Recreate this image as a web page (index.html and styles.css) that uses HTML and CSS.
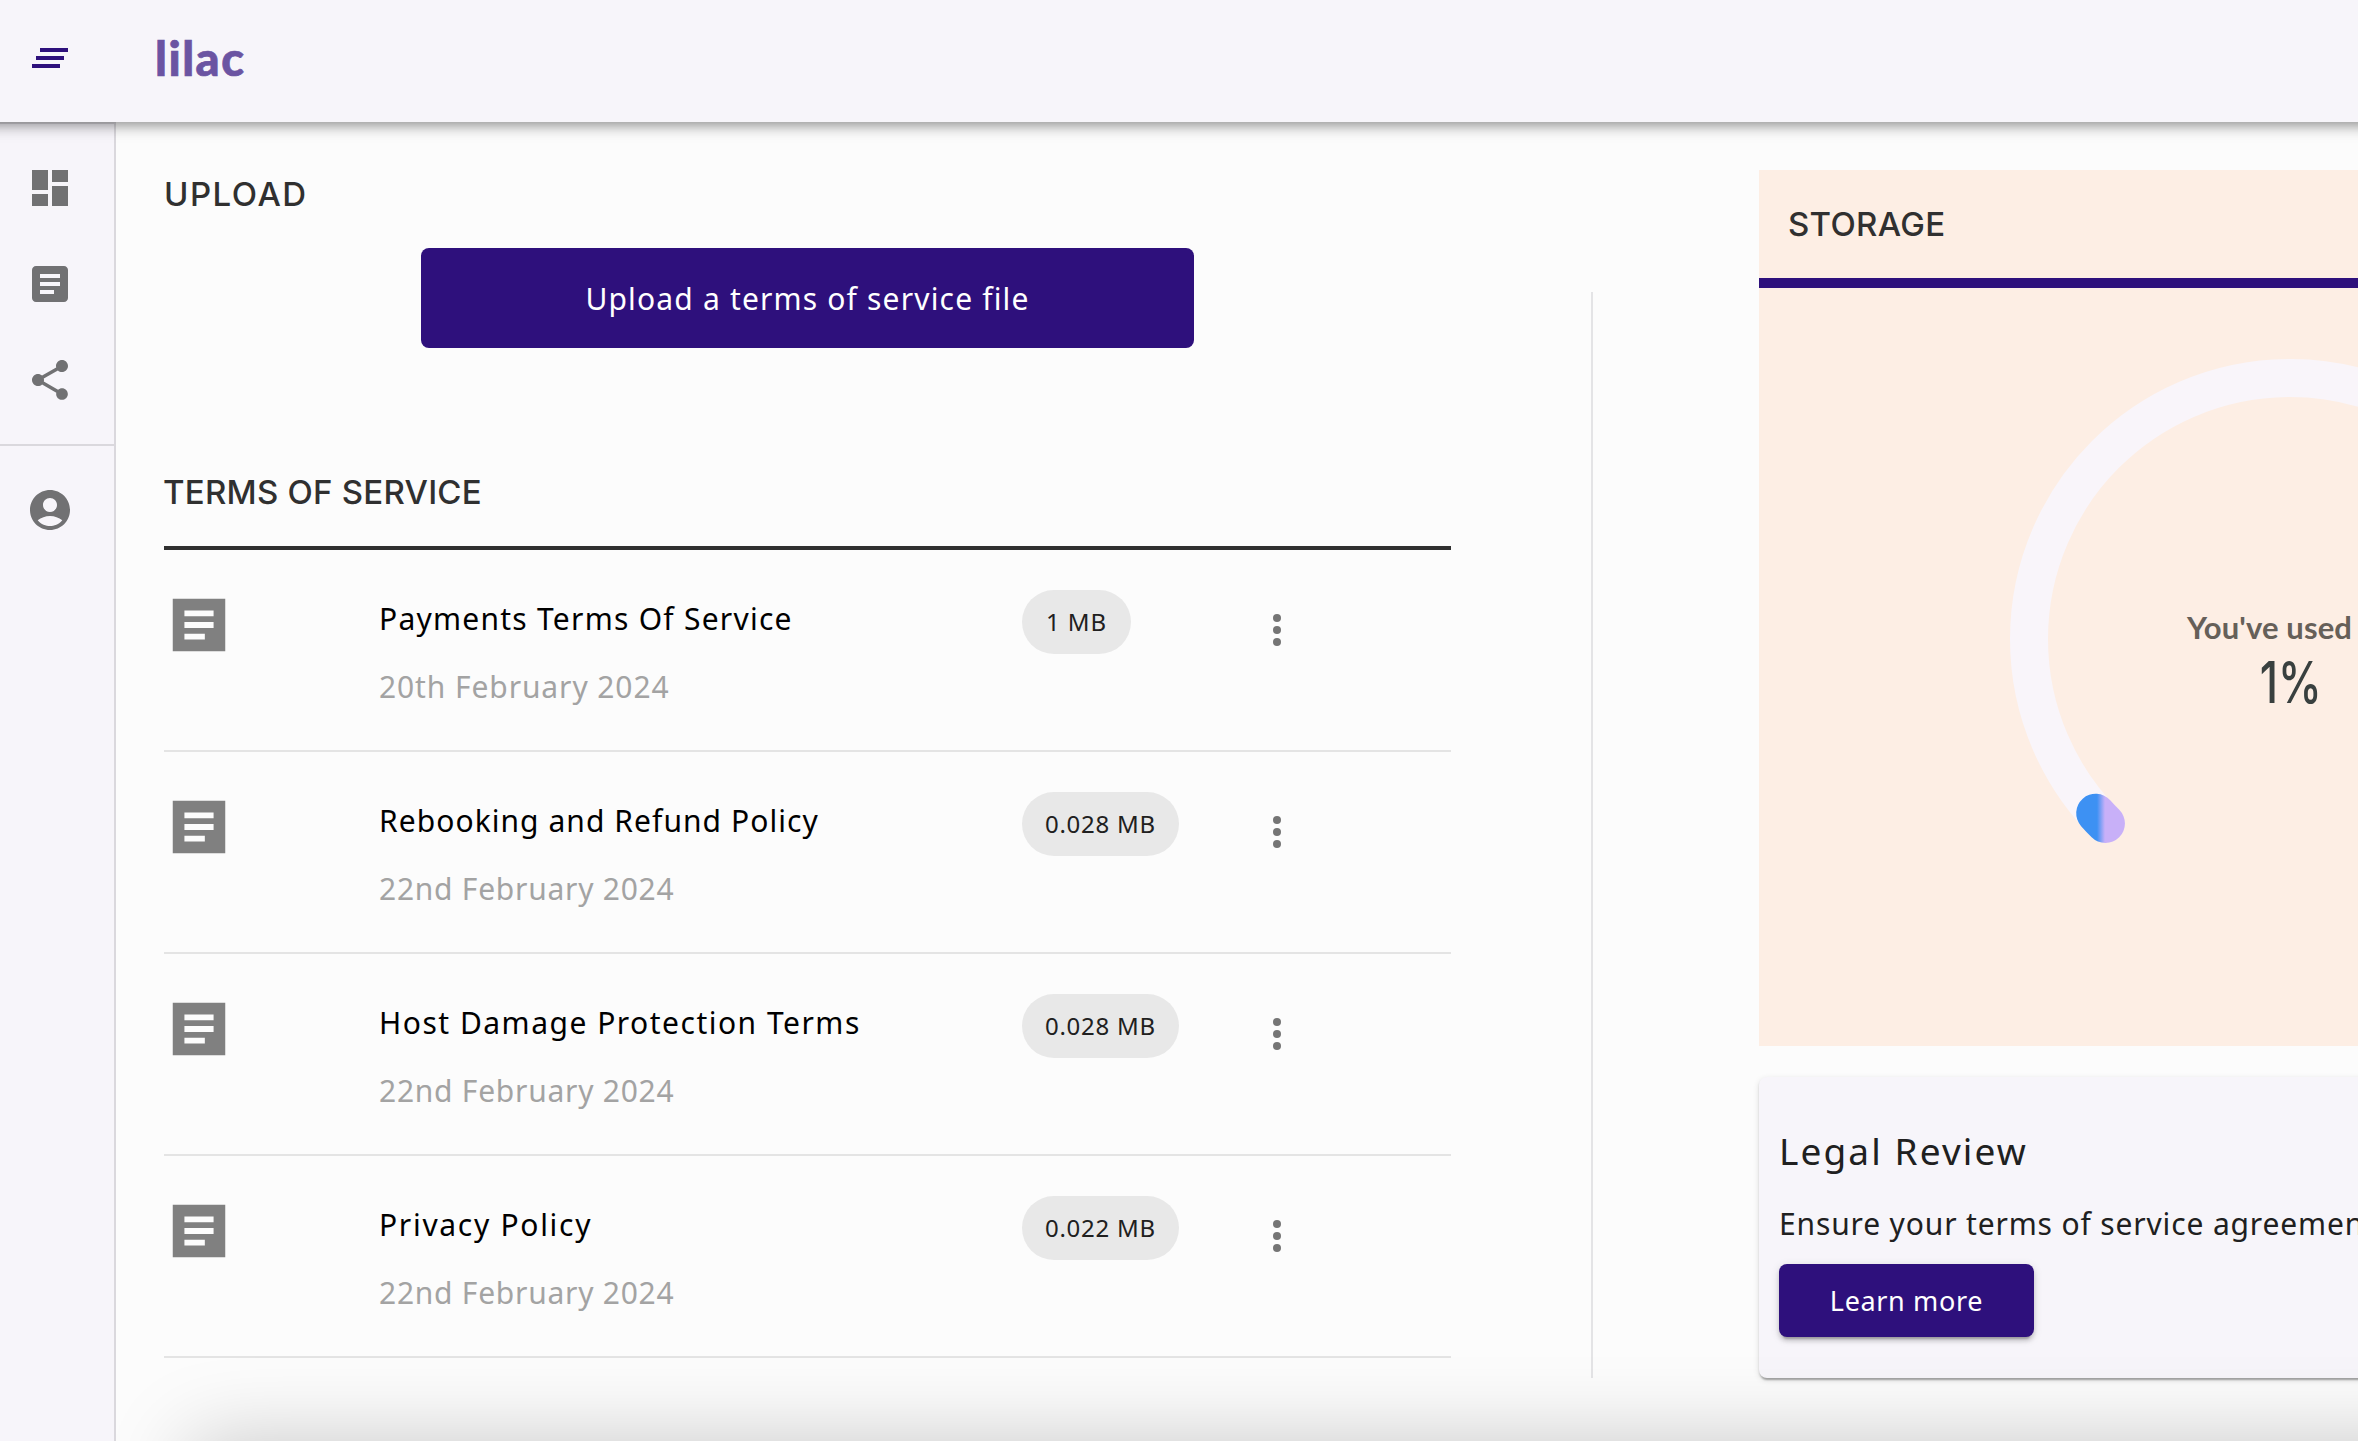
FILE: index.html
```html
<!DOCTYPE html>
<html lang="en">
<head>
<meta charset="utf-8">
<title>lilac</title>
<link rel="stylesheet" href="styles.css">
</head>
<body>
<svg class="defs" aria-hidden="true">
  <symbol id="doc" viewBox="0 0 24 24"><path fill-rule="evenodd" d="M3 3h18v18H3zM7 7v2h10V7zM7 11v2h10v-2zM7 15v2h7v-2z"/></symbol>
  <symbol id="more" viewBox="0 0 24 24"><circle cx="12" cy="6" r="2"/><circle cx="12" cy="12" r="2"/><circle cx="12" cy="18" r="2"/></symbol>
</svg>
<header class="appbar">
  <svg class="icon menu" viewBox="0 0 24 24"><path d="M5 13h14v-2H5v2zm-2 4h14v-2H3v2zM7 7v2h14V7H7z"/></svg>
  <span class="logo">lilac</span>
</header>
<div class="body">
  <nav class="sidebar">
    <div class="group">
      <svg class="icon" viewBox="0 0 24 24"><path d="M3 13h8V3H3v10zm0 8h8v-6H3v6zm10 0h8V11h-8v10zm0-18v6h8V3h-8z"/></svg>
      <svg class="icon" viewBox="0 0 24 24"><path d="M19 3H5c-1.1 0-2 .9-2 2v14c0 1.1.9 2 2 2h14c1.1 0 2-.9 2-2V5c0-1.1-.9-2-2-2zm-5 14H7v-2h7v2zm3-4H7v-2h10v2zm0-4H7V7h10v2z"/></svg>
      <svg class="icon" viewBox="0 0 24 24"><path d="M18 16.08c-.76 0-1.44.3-1.96.77L8.91 12.7c.05-.23.09-.46.09-.7s-.04-.47-.09-.7l7.05-4.11c.54.5 1.25.81 2.04.81 1.66 0 3-1.34 3-3s-1.34-3-3-3-3 1.34-3 3c0 .24.04.47.09.7L8.04 9.81C7.5 9.31 6.79 9 6 9c-1.66 0-3 1.34-3 3s1.34 3 3 3c.79 0 1.5-.31 2.04-.81l7.12 4.16c-.05.21-.08.43-.08.65 0 1.61 1.31 2.92 2.92 2.92 1.61 0 2.92-1.31 2.92-2.92s-1.31-2.92-2.92-2.92z"/></svg>
    </div>
    <div class="group">
      <svg class="icon" viewBox="0 0 24 24"><path d="M12 2C6.48 2 2 6.48 2 12s4.48 10 10 10 10-4.48 10-10S17.52 2 12 2zm0 4c1.93 0 3.5 1.57 3.5 3.5S13.93 13 12 13s-3.500-1.570-3.500-3.500S10.070 6 12 6zm0 14c-2.030 0-4.430-.82-6.140-2.880C7.550 15.800 9.680 15 12 15s4.450.8 6.140 2.120C16.430 19.180 14.030 20 12 20z"/></svg>
    </div>
  </nav>
  <main class="content">
    <section class="files">
      <h2 class="heading upload-heading">UPLOAD</h2>
      <button class="btn upload">Upload a terms of service file</button>
      <h2 class="heading list-heading">TERMS OF SERVICE</h2>
      <div class="row">
        <svg class="doc"><use href="#doc"/></svg>
        <div class="info"><div class="name payments">Payments Terms Of Service</div><div class="date first-date">20th February 2024</div></div>
        <span class="chip small">1 MB</span>
        <svg class="icon more"><use href="#more"/></svg>
      </div>
      <div class="row">
        <svg class="doc"><use href="#doc"/></svg>
        <div class="info"><div class="name rebooking">Rebooking and Refund Policy</div><div class="date">22nd February 2024</div></div>
        <span class="chip">0.028 MB</span>
        <svg class="icon more"><use href="#more"/></svg>
      </div>
      <div class="row">
        <svg class="doc"><use href="#doc"/></svg>
        <div class="info"><div class="name host">Host Damage Protection Terms</div><div class="date">22nd February 2024</div></div>
        <span class="chip">0.028 MB</span>
        <svg class="icon more"><use href="#more"/></svg>
      </div>
      <div class="row">
        <svg class="doc"><use href="#doc"/></svg>
        <div class="info"><div class="name privacy">Privacy Policy</div><div class="date">22nd February 2024</div></div>
        <span class="chip">0.022 MB</span>
        <svg class="icon more"><use href="#more"/></svg>
      </div>
    </section>
    <div class="divider"></div>
    <aside class="side">
      <section class="storage">
        <h2 class="heading storage-heading">STORAGE</h2>
        <div class="gauge">
          <svg class="ring" viewBox="0 0 560 560">
            <defs><linearGradient id="fill" gradientUnits="userSpaceOnUse" x1="87" y1="0" x2="95" y2="0"><stop offset="0" stop-color="#3d91f3"/><stop offset="1" stop-color="#c8b0f8"/></linearGradient></defs>
            <path class="track" d="M95.450 464.550A261 261 0 1 1 464.550 464.550"/>
            <path class="value" d="M95.450 464.550A261 261 0 0 1 85.700 454.200"/>
          </svg>
          <div class="readout"><div class="caption">You've used</div><div class="percent">1%</div></div>
        </div>
      </section>
      <section class="card">
        <h3 class="card-title">Legal Review</h3>
        <p class="card-text">Ensure your terms of service agreements</p>
        <button class="btn learn">Learn more</button>
      </section>
    </aside>
  </main>
</div>
<div class="bottom-shade"></div>
</body>
</html>
```
FILE: styles.css
```css
* { box-sizing: border-box; }
html { overflow: hidden; }
body {
  margin: 0;
  height: 1441px;
  position: relative;
  overflow: hidden;
  display: flex;
  flex-direction: column;
  background: #fcfcfc;
  color: #202020;
  font-family: "Noto Sans", sans-serif;
}
h2, h3, p { margin: 0; font-weight: 400; }
.defs { position: absolute; width: 0; height: 0; }
.icon { display: block; width: 48px; height: 48px; fill: #717173; }

.appbar {
  position: relative;
  z-index: 2;
  flex: none;
  height: 122px;
  margin: 0 -30px;
  padding: 0 56px;
  display: flex;
  align-items: flex-start;
  background: #f7f5fa;
  box-shadow: 0 4px 8px -2px rgba(0,0,0,.2), 0 8px 10px rgba(0,0,0,.14), 0 2px 20px rgba(0,0,0,.12);
}
.menu { margin-top: 34px; fill: #2e107c; }
.logo {
  margin-left: 81px;
  font: 900 47px/116px Lato, sans-serif;
  letter-spacing: 1.5px;
  color: #6b54a2;
  -webkit-text-stroke: .7px #6b54a2;
}

.body { flex: 1; min-height: 0; display: flex; }
.sidebar {
  flex: none;
  width: 116px;
  border-right: 2px solid #dad8dd;
  border-top: 2px solid #dad8dd;
  background: #f7f5fa;
}
.group { padding: 40px 26px; display: flex; flex-direction: column; gap: 48px; }
.group + .group { border-top: 2px solid #dad8dd; }

.content { flex: 1; min-width: 0; display: flex; align-items: flex-start; overflow: hidden; padding-left: 48px; }
.files { flex: none; width: 1287px; padding-top: 52px; }
.heading { font: 500 33px/40px Inter, sans-serif; color: #303030; }
.upload-heading { letter-spacing: 1.500px; }
.btn { display: block; border: 0; padding: 0; border-radius: 8px; background: #2e107c; color: #fff; font-family: inherit; }
.upload { width: 773px; height: 100px; margin: 34px auto 124px; font-size: 30px; letter-spacing: 1.170px; }
.list-heading { letter-spacing: .240px; text-indent: -1px; padding-bottom: 34px; border-bottom: 4px solid #303030; }

.row {
  height: 202px;
  display: grid;
  grid-template-columns: 215px 643px 231px 1fr;
  align-items: start;
  justify-items: start;
  padding-top: 40px;
  border-bottom: 2px solid #e4e4e4;
}
.doc { width: 70px; height: 70px; fill: #808080; }
.info { padding-top: 9px; font-size: 30px; line-height: 40px; display: grid; gap: 28px; }
.name { color: #000; }
.payments { letter-spacing: 1.250px; }
.rebooking { letter-spacing: 1.060px; }
.host { letter-spacing: 1.500px; }
.privacy { letter-spacing: 1.700px; }
.date { color: #a3a3a3; letter-spacing: .750px; }
.first-date { letter-spacing: .900px; }
.chip { height: 64px; padding: 0 23px; border-radius: 32px; background: #e8e8e8; font-size: 24px; line-height: 63px; letter-spacing: .730px; }
.small { padding: 0 24px; letter-spacing: .900px; }
.more { margin-top: 16px; fill: #757575; }

.divider { flex: none; width: 2px; height: 1086px; margin: 170px 166px 0 140px; background: #e4e4e6; }

.side { flex: none; width: 900px; padding-top: 48px; display: grid; gap: 31px; }
.storage { height: 876px; background: #fdeee4; overflow: hidden; }
.storage-heading { height: 118px; padding: 34px 29px 0; border-bottom: 10px solid #2e107c; letter-spacing: .300px; }
.gauge { display: grid; padding: 71px 0 0 251px; }
.ring, .readout { grid-area: 1 / 1; }
.ring { width: 560px; height: 560px; fill: none; stroke-width: 38; }
.track { stroke: #f9f5fa; stroke-linecap: round; }
.value { stroke: url(#fill); stroke-linecap: round; stroke-width: 39; }
.readout { width: 560px; padding-top: 248px; }
.caption { padding-left: 177px; font: 700 31px/40px Lato, sans-serif; letter-spacing: .130px; color: #666059; }
.percent { margin-top: 5px; padding-left: 2px; text-align: center; font: 500 58px/60px Inter, sans-serif; color: #39403f; transform: scaleX(.76); }

.card {
  height: 301px;
  padding: 50px 20px 0;
  border-radius: 8px;
  background: #f7f5fa;
  box-shadow: 0 4px 2px -2px rgba(0,0,0,.2), 0 2px 2px rgba(0,0,0,.14), 0 2px 6px rgba(0,0,0,.12);
}
.card-title { font-size: 37px; line-height: 48px; letter-spacing: 2.100px; }
.card-text { margin-top: 29px; font-size: 30px; line-height: 40px; letter-spacing: .850px; white-space: nowrap; }
.learn {
  width: 255px;
  height: 73px;
  margin-top: 20px;
  padding-bottom: 0;
  font-size: 27px;
  letter-spacing: .650px;
  box-shadow: 0 6px 2px -4px rgba(0,0,0,.2), 0 4px 4px rgba(0,0,0,.14), 0 2px 10px rgba(0,0,0,.12);
}

.bottom-shade {
  position: absolute;
  left: 190px;
  right: -200px;
  top: 1441px;
  height: 200px;
  box-shadow: 0 0 84px rgba(0,0,0,.21);
}
```
